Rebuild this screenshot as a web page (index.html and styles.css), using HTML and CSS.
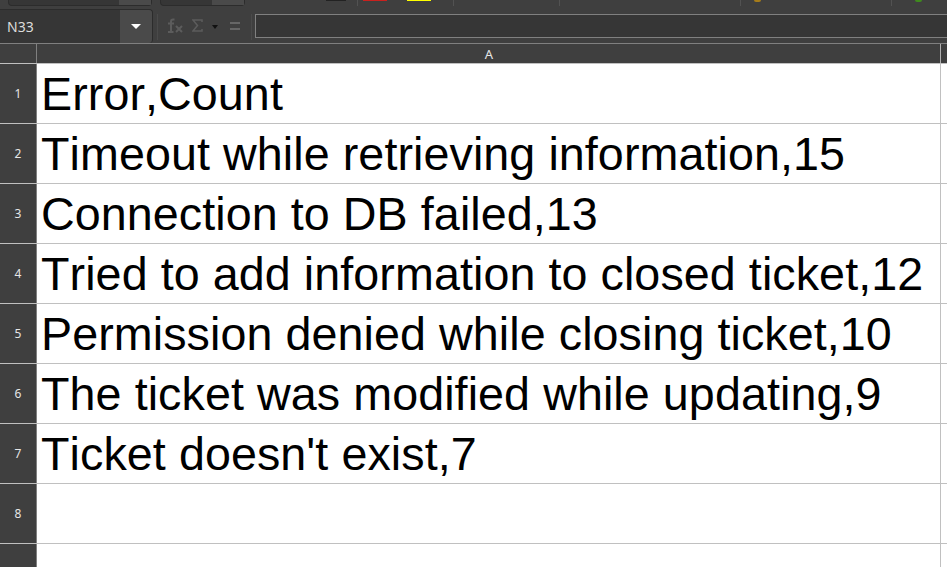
FILE: index.html
```html
<!DOCTYPE html>
<html lang="en">

    <head>
        <meta charset="UTF-8">
        <title>Calc</title>
        <link rel="stylesheet" href="styles.css">
    </head>

    <body>
        <div class="toolbar">
            <div class="combo combo-font"><span class="combo-btn"></span></div>
            <div class="combo combo-size"><span class="combo-btn"></span></div>
            <span class="swatch swatch-black"></span>
            <span class="tool-sep sep-1"></span>
            <span class="swatch swatch-red"></span>
            <span class="swatch swatch-yellow"></span>
            <span class="tool-sep sep-2"></span>
            <span class="tool-sep sep-3"></span>
            <span class="tool-sep sep-4"></span>
            <span class="dot dot-amber"></span>
            <span class="tool-sep sep-5"></span>
            <span class="dot dot-green"></span>
        </div>

        <div class="formula-bar">
            <div class="name-box">
                <span class="name-text">N33</span>
                <span class="name-btn"><span class="arrow-white"></span></span>
            </div>
            <div class="bar-tools">
                <span class="bar-sep"></span>
                <svg class="icon-fx" width="17" height="15" viewBox="0 0 17 15">
                    <path d="M8.5 1.5H7Q5 1.5 5 3.5V14M2 14H7.5M2 5.5H8" fill="none" stroke="#5c5c5c" stroke-width="2"/>
                    <path d="M10 8L16 14M16 8L10 14" fill="none" stroke="#5c5c5c" stroke-width="2"/>
                </svg>
                <svg class="icon-sum" width="11" height="13" viewBox="0 0 11 13">
                    <path d="M10 3V1H1L5.5 6.5L1 12H10V10" fill="none" stroke="#5c5c5c" stroke-width="1.5"/>
                </svg>
                <span class="arrow-black"></span>
                <span class="icon-equals"></span>
                <span class="bar-sep sep-last"></span>
                <div class="formula-input"></div>
            </div>
        </div>

        <div class="col-header">
            <div class="corner"></div>
            <div class="col-a">A</div>
        </div>

        <div class="grid">
            <div class="row"><div class="row-head">1</div><div class="cell">Error,Count</div></div>
            <div class="row"><div class="row-head">2</div><div class="cell">Timeout while retrieving information,15</div></div>
            <div class="row"><div class="row-head">3</div><div class="cell">Connection to DB failed,13</div></div>
            <div class="row"><div class="row-head">4</div><div class="cell">Tried to add information to closed ticket,12</div></div>
            <div class="row"><div class="row-head">5</div><div class="cell">Permission denied while closing ticket,10</div></div>
            <div class="row"><div class="row-head">6</div><div class="cell">The ticket was modified while updating,9</div></div>
            <div class="row"><div class="row-head">7</div><div class="cell">Ticket doesn't exist,7</div></div>
            <div class="row"><div class="row-head">8</div><div class="cell"></div></div>
            <div class="row"><div class="row-head"></div><div class="cell"></div></div>
        </div>
    </body>

</html>
```

FILE: styles.css
```css
html, body {
    margin: 0;
    height: 100%;
    overflow: hidden;
}

body {
    width: 947px;
    height: 567px;
    background: #ffffff;
    font-family: "Liberation Sans", Arial, sans-serif;
}

.toolbar {
    height: 9px;
    background: #3f3f3f;
    display: flex;
    align-items: flex-start;
}

.combo {
    height: 6px;
    box-sizing: border-box;
    border: 1px solid #2c2c2c;
    border-top: none;
    border-radius: 0 0 4px 4px;
    background: #363636;
    display: flex;
    justify-content: flex-end;
}

.combo-font {
    width: 144px;
    margin-left: 8px;
}

.combo-size {
    width: 85px;
    margin-left: 8px;
}

.combo-btn {
    width: 32px;
    background: #4a4a4a;
}

.swatch {
    height: 1px;
    display: block;
}

.swatch-black {
    width: 20px;
    margin-left: 81px;
    background: #222222;
}

.swatch-red {
    width: 24px;
    margin-left: 5px;
    background: #c9211e;
}

.swatch-yellow {
    width: 24px;
    margin-left: 20px;
    background: #ffff00;
}

.tool-sep {
    width: 1px;
    height: 6px;
    background: #525252;
}

.sep-1 {
    margin-left: 11px;
}

.sep-2 {
    margin-left: 22px;
}

.sep-3 {
    margin-left: 105px;
}

.sep-4 {
    margin-left: 180px;
}

.sep-5 {
    margin-left: 130px;
}

.dot {
    width: 7px;
    height: 2px;
    border-radius: 0 0 3px 3px;
}

.dot-amber {
    margin-left: 13px;
    background: #a67c1a;
}

.dot-green {
    margin-left: 23px;
    background: #3f8a1e;
}

.formula-bar {
    height: 35px;
    background: #3f3f3f;
    display: flex;
    box-sizing: border-box;
    border-bottom: 1px solid #808080;
}

.name-box {
    width: 153px;
    display: flex;
    box-sizing: border-box;
    border: 1px solid #2c2c2c;
    border-width: 1px 1px 0 0;
    border-radius: 0 4px 4px 0;
    background: #363636;
    overflow: hidden;
}

.name-text {
    flex: 1;
    padding-left: 7px;
    font-family: "Noto Sans", sans-serif;
    font-size: 14px;
    line-height: 33px;
    color: #dcdcdc;
}

.name-btn {
    width: 32px;
    background: #4a4a4a;
    display: flex;
    align-items: center;
    justify-content: center;
}

.arrow-white {
    width: 0;
    height: 0;
    border-left: 5px solid transparent;
    border-right: 5px solid transparent;
    border-top: 5px solid #ffffff;
}

.bar-tools {
    flex: 1;
    display: flex;
    align-items: flex-start;
    padding-top: 5px;
    min-width: 0;
}

.bar-sep {
    width: 1px;
    height: 26px;
    margin-left: 4px;
    background: #4a4a4a;
}

.sep-last {
    margin-left: 11px;
}

.icon-fx {
    margin: 4px 0 0 8px;
}

.icon-sum {
    margin: 5px 0 0 9px;
}

.arrow-black {
    width: 0;
    height: 0;
    margin: 11px 0 0 9px;
    border-left: 3.5px solid transparent;
    border-right: 3.5px solid transparent;
    border-top: 4px solid #111111;
}

.icon-equals {
    width: 10px;
    height: 8px;
    margin: 8px 0 0 12px;
    border-top: 2px solid #666666;
    border-bottom: 2px solid #666666;
    box-sizing: border-box;
}

.formula-input {
    flex: 1;
    height: 24px;
    margin-left: 3px;
    box-sizing: border-box;
    background: #363636;
    border: 1px solid #808080;
    border-right: none;
}

.col-header {
    height: 20px;
    display: flex;
    background: #3f3f3f;
    box-sizing: border-box;
    border-bottom: 1px solid #c0c0c0;
}

.corner {
    width: 37px;
    box-sizing: border-box;
    border-right: 1px solid #808080;
}

.col-a {
    width: 904px;
    box-sizing: border-box;
    padding-left: 1px;
    border-right: 1px solid #b0b0b0;
    font-family: "Noto Sans", sans-serif;
    font-size: 13px;
    line-height: 20px;
    text-align: center;
    color: #e6e6e6;
}

.grid {
    height: 503px;
    overflow: hidden;
}

.row {
    height: 60px;
    display: flex;
    box-sizing: border-box;
    border-bottom: 1px solid #c0c0c0;
}

.row-head {
    width: 37px;
    box-sizing: border-box;
    background: #3f3f3f;
    border-right: 1px solid #808080;
    color: #e6e6e6;
    font-family: "Noto Sans", sans-serif;
    font-size: 12px;
    line-height: 59px;
    text-align: center;
}

.cell {
    width: 904px;
    box-sizing: border-box;
    padding: 1px 0 0 4px;
    border-right: 1px solid #c0c0c0;
    font-size: 46.67px;
    font-kerning: none;
    letter-spacing: 0.07px;
    line-height: 59px;
    color: #000000;
    white-space: nowrap;
}
```
